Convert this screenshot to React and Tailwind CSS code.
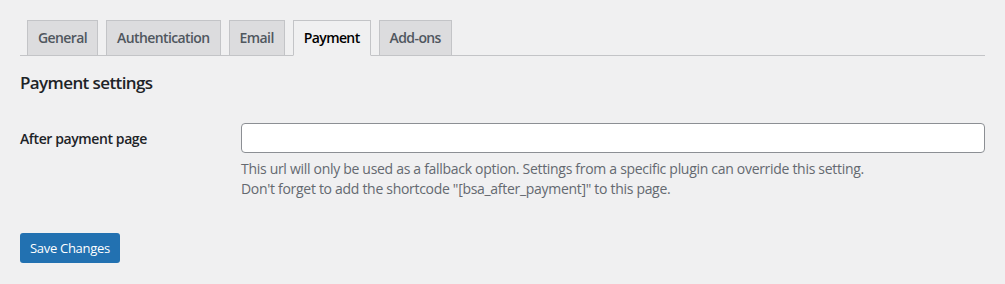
import React, { useState } from 'react';

const tabs = ['General', 'Authentication', 'Email', 'Payment', 'Add-ons'];

const App = () => {
    const [active, setActive] = useState('Payment');
    const [url, setUrl] = useState('');

    return (
        <div className="min-h-[284px] w-full bg-[#f0f0f1] pl-5 pr-5 pt-5 text-[14px] tracking-[-0.3px] text-[#3c434a]" style={{ fontFamily: '"Open Sans", "Noto Sans", sans-serif' }}>
            {/* Tabs */}
            <nav className="flex border-b border-[#c3c4c7] pl-[7px]">
                {tabs.map(tab => {
                    const isActive = tab === active;
                    return (
                        <button
                            key={tab}
                            onClick={() => setActive(tab)}
                            className={`-mb-px ml-2 first:ml-0 border border-[#c3c4c7] px-[10px] py-[5px] text-[14px] font-semibold leading-[24px] tracking-[-0.6px] ${isActive ? 'border-b-[#f0f0f1] bg-[#f0f0f1] text-black' : 'bg-[#dcdcde] text-[#50575e]'}`}
                        >
                            {tab}
                        </button>
                    );
                })}
            </nav>

            <h2 className="mt-[15px] text-[17px] font-semibold leading-[24px] tracking-[-0.6px] text-[#1d2327]">Payment settings</h2>

            {/* Form row */}
            <div className="mt-[28px] flex">
                <label className="w-[221px] shrink-0 pt-[4px] font-semibold leading-[24px] tracking-[-0.4px] text-[#1d2327]">After payment page</label>
                <div className="flex-1">
                    <input
                        type="text"
                        value={url}
                        onChange={e => setUrl(e.target.value)}
                        className="block h-[30px] w-[744px] rounded-[4px] border border-[#8c8f94] bg-white px-2"
                    />
                    <p className="mt-[6px] leading-[20px] text-[#646970]">
                        This url will only be used as a fallback option. Settings from a specific plugin can override this setting.
                        <br />
                        Don't forget to add the shortcode "[bsa_after_payment]" to this page.
                    </p>
                </div>
            </div>

            <button className="mt-[34px] h-[30px] rounded-[3px] bg-[#2271b1] px-[10px] text-[13px] leading-[28px] text-white">
                Save Changes
            </button>
        </div>
    );
};

export default App;
